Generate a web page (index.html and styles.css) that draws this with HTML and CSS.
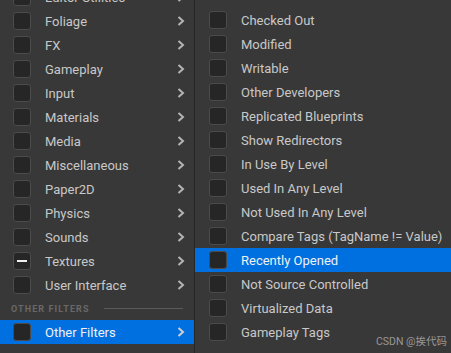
FILE: index.html
```html
<!DOCTYPE html>
<html lang="en">
<head>
	<meta charset="UTF-8">
	<title>Filters</title>
	<link rel="stylesheet" href="styles.css">
</head>
<body>
<div class="menus">
	<div class="menu left">
		<div class="list">
			<div class="row"><span class="box"></span><span class="label">Editor Utilities</span><svg class="arrow" viewBox="0 0 8 10"><path d="M1.5 1 L6 5 L1.5 9"/></svg></div>
			<div class="row"><span class="box"></span><span class="label">Foliage</span><svg class="arrow" viewBox="0 0 8 10"><path d="M1.5 1 L6 5 L1.5 9"/></svg></div>
			<div class="row"><span class="box"></span><span class="label">FX</span><svg class="arrow" viewBox="0 0 8 10"><path d="M1.5 1 L6 5 L1.5 9"/></svg></div>
			<div class="row"><span class="box"></span><span class="label">Gameplay</span><svg class="arrow" viewBox="0 0 8 10"><path d="M1.5 1 L6 5 L1.5 9"/></svg></div>
			<div class="row"><span class="box"></span><span class="label">Input</span><svg class="arrow" viewBox="0 0 8 10"><path d="M1.5 1 L6 5 L1.5 9"/></svg></div>
			<div class="row"><span class="box"></span><span class="label">Materials</span><svg class="arrow" viewBox="0 0 8 10"><path d="M1.5 1 L6 5 L1.5 9"/></svg></div>
			<div class="row"><span class="box"></span><span class="label">Media</span><svg class="arrow" viewBox="0 0 8 10"><path d="M1.5 1 L6 5 L1.5 9"/></svg></div>
			<div class="row"><span class="box"></span><span class="label">Miscellaneous</span><svg class="arrow" viewBox="0 0 8 10"><path d="M1.5 1 L6 5 L1.5 9"/></svg></div>
			<div class="row"><span class="box"></span><span class="label">Paper2D</span><svg class="arrow" viewBox="0 0 8 10"><path d="M1.5 1 L6 5 L1.5 9"/></svg></div>
			<div class="row"><span class="box"></span><span class="label">Physics</span><svg class="arrow" viewBox="0 0 8 10"><path d="M1.5 1 L6 5 L1.5 9"/></svg></div>
			<div class="row"><span class="box"></span><span class="label">Sounds</span><svg class="arrow" viewBox="0 0 8 10"><path d="M1.5 1 L6 5 L1.5 9"/></svg></div>
			<div class="row"><span class="box mixed"></span><span class="label">Textures</span><svg class="arrow" viewBox="0 0 8 10"><path d="M1.5 1 L6 5 L1.5 9"/></svg></div>
			<div class="row"><span class="box"></span><span class="label">User Interface</span><svg class="arrow" viewBox="0 0 8 10"><path d="M1.5 1 L6 5 L1.5 9"/></svg></div>
			<div class="section"><span>OTHER FILTERS</span><i></i></div>
			<div class="row active"><span class="box"></span><span class="label">Other Filters</span><svg class="arrow" viewBox="0 0 8 10"><path d="M1.5 1 L6 5 L1.5 9"/></svg></div>
		</div>
	</div>
	<div class="menu right">
		<div class="row"><span class="box"></span><span class="label">Checked Out</span></div>
		<div class="row"><span class="box"></span><span class="label">Modified</span></div>
		<div class="row"><span class="box"></span><span class="label">Writable</span></div>
		<div class="row"><span class="box"></span><span class="label">Other Developers</span></div>
		<div class="row"><span class="box"></span><span class="label">Replicated Blueprints</span></div>
		<div class="row"><span class="box"></span><span class="label">Show Redirectors</span></div>
		<div class="row"><span class="box"></span><span class="label">In Use By Level</span></div>
		<div class="row"><span class="box"></span><span class="label">Used In Any Level</span></div>
		<div class="row"><span class="box"></span><span class="label">Not Used In Any Level</span></div>
		<div class="row"><span class="box"></span><span class="label">Compare Tags (TagName != Value)</span></div>
		<div class="row active"><span class="box"></span><span class="label">Recently Opened</span></div>
		<div class="row"><span class="box"></span><span class="label">Not Source Controlled</span></div>
		<div class="row"><span class="box"></span><span class="label">Virtualized Data</span></div>
		<div class="row"><span class="box"></span><span class="label">Gameplay Tags</span></div>
		<div class="mark">CSDN @挨代码</div>
	</div>
</div>
</body>
</html>
```

FILE: styles.css
```css
* {
	box-sizing: border-box;
}
body {
	margin: 0;
	width: 451px;
	height: 353px;
	overflow: hidden;
	background: #262626;
	font-family: Roboto, "Noto Sans CJK SC", sans-serif;
	font-size: 13px;
	color: #c8c8c8;
}
.menus {
	display: flex;
	height: 353px;
}
.menu {
	background: #383838;
	height: 100%;
	overflow: hidden;
}
.left {
	width: 194px;
}
.left .list {
	margin-top: -15px;
}
.right {
	position: relative;
	flex: 1;
	margin-left: 1px;
	padding-top: 8px;
}
.row {
	display: flex;
	align-items: center;
	height: 24px;
}
.row.active {
	background: #0070e0;
	color: #f0f0f0;
}
.box {
	width: 18px;
	height: 18px;
	margin-left: 13px;
	border: 1px solid #4b4b4b;
	border-radius: 3px;
	background: #262626;
	display: flex;
	align-items: center;
	justify-content: center;
}
.right .box {
	margin-left: 14px;
}
.box.mixed::after {
	content: '';
	width: 10px;
	height: 2px;
	background: #f0f0f0;
}
.label {
	flex: 1;
	margin-left: 14px;
	white-space: nowrap;
}
.arrow {
	width: 8px;
	height: 10px;
	margin-right: 9px;
	fill: none;
	stroke: #b4b4b4;
	stroke-width: 2;
}
.row.active .arrow {
	stroke: #d0d0d0;
}
.section {
	display: flex;
	align-items: center;
	height: 23px;
	padding: 0 11px;
	font-size: 9px;
	font-weight: 700;
	letter-spacing: 1.1px;
	color: #686868;
}
.section i {
	flex: 1;
	height: 1px;
	margin-left: 14px;
	background: #5a5a5a;
}
.mark {
	position: absolute;
	right: 4px;
	bottom: 5px;
	font-size: 10.5px;
	color: #a8a8a8;
	opacity: .85;
}
```
